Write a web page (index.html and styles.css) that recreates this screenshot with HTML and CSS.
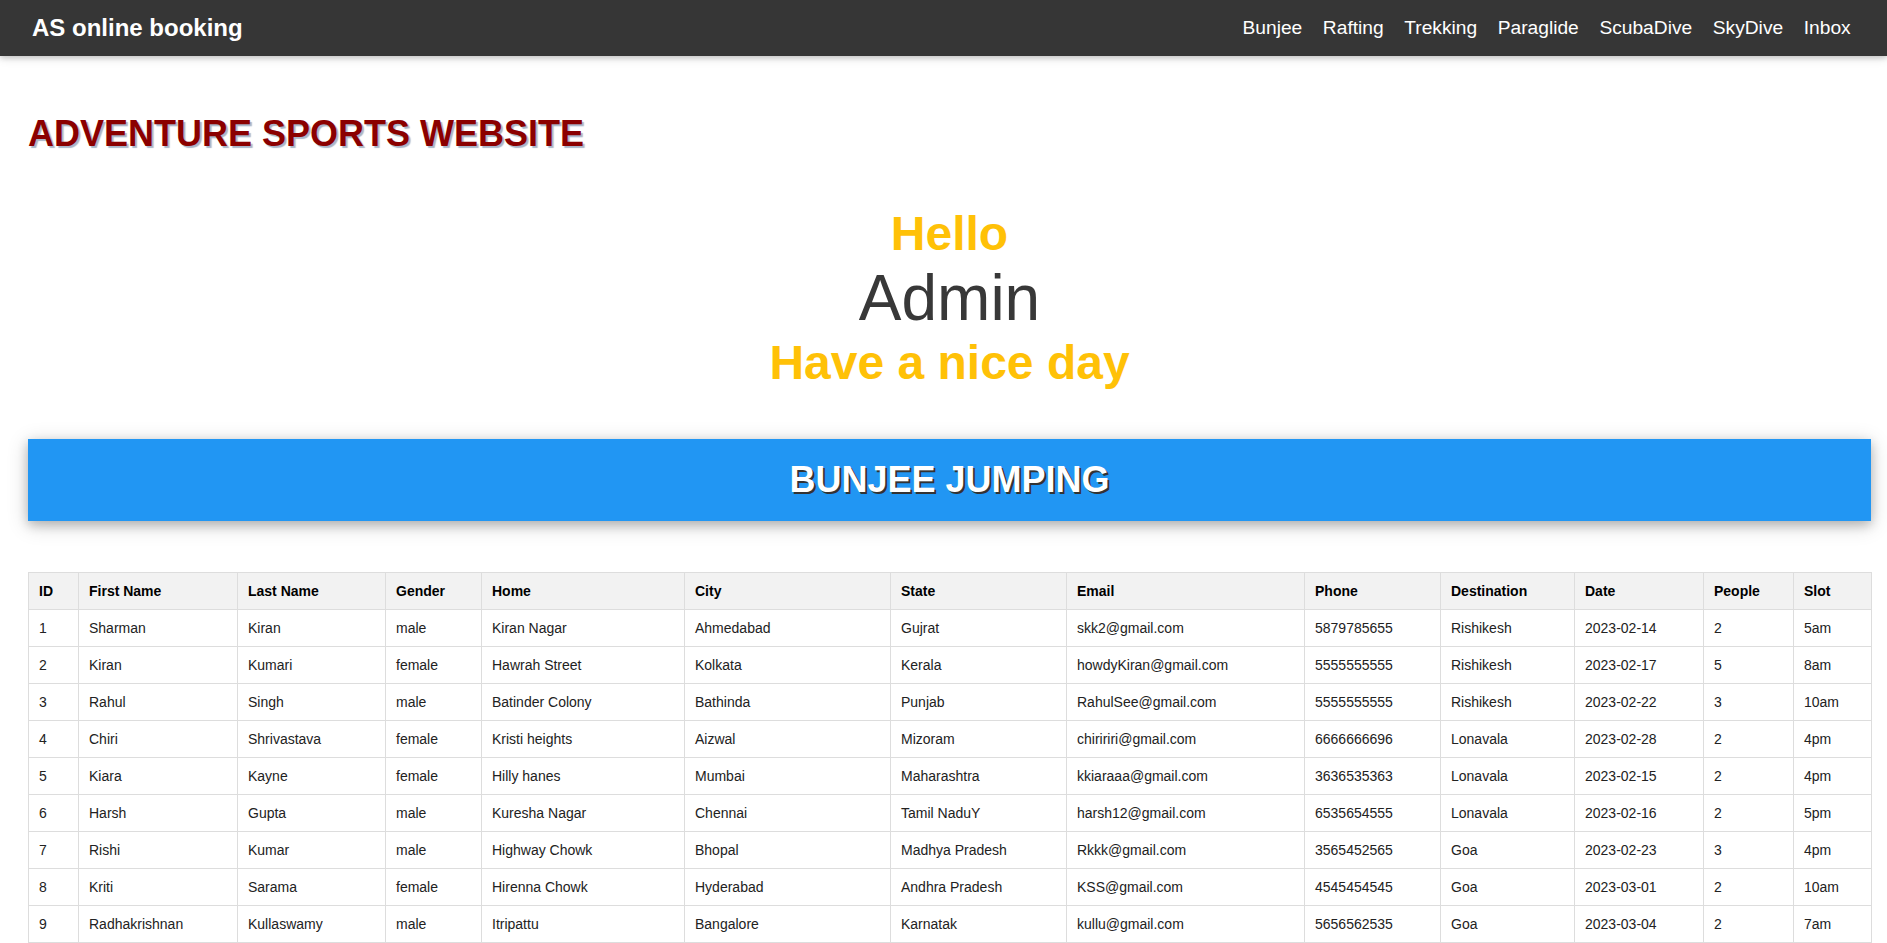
FILE: index.html
```html
<!DOCTYPE html>
<html lang="en">
<head>
<meta charset="utf-8">
<title>AS online booking</title>
<link rel="stylesheet" href="styles.css">
</head>
<body>
<nav class="navbar">
  <a class="brand" href="#">AS online booking</a>
  <ul class="nav-links">
    <li><a href="#">Bunjee</a></li>
    <li><a href="#">Rafting</a></li>
    <li><a href="#">Trekking</a></li>
    <li><a href="#">Paraglide</a></li>
    <li><a href="#">ScubaDive</a></li>
    <li><a href="#">SkyDive</a></li>
    <li><a href="#">Inbox</a></li>
  </ul>
</nav>
<main class="page">
  <h1 class="site-title">ADVENTURE SPORTS WEBSITE</h1>
  <section class="greeting">
    <div class="hello">Hello</div>
    <div class="user">Admin</div>
    <div class="wish">Have a nice day</div>
  </section>
  <header class="banner"><h2>BUNJEE JUMPING</h2></header>
  <table class="bookings">
    <thead>
      <tr>
        <th class="c-id">ID</th><th class="c-first">First Name</th><th class="c-last">Last Name</th><th class="c-gender">Gender</th><th class="c-home">Home</th><th class="c-city">City</th><th class="c-state">State</th><th class="c-email">Email</th><th class="c-phone">Phone</th><th class="c-dest">Destination</th><th class="c-date">Date</th><th class="c-people">People</th><th class="c-slot">Slot</th>
      </tr>
    </thead>
    <tbody>
      <tr><td>1</td><td>Sharman</td><td>Kiran</td><td>male</td><td>Kiran Nagar</td><td>Ahmedabad</td><td>Gujrat</td><td>skk2@gmail.com</td><td>5879785655</td><td>Rishikesh</td><td>2023-02-14</td><td>2</td><td>5am</td></tr>
      <tr><td>2</td><td>Kiran</td><td>Kumari</td><td>female</td><td>Hawrah Street</td><td>Kolkata</td><td>Kerala</td><td>howdyKiran@gmail.com</td><td>5555555555</td><td>Rishikesh</td><td>2023-02-17</td><td>5</td><td>8am</td></tr>
      <tr><td>3</td><td>Rahul</td><td>Singh</td><td>male</td><td>Batinder Colony</td><td>Bathinda</td><td>Punjab</td><td>RahulSee@gmail.com</td><td>5555555555</td><td>Rishikesh</td><td>2023-02-22</td><td>3</td><td>10am</td></tr>
      <tr><td>4</td><td>Chiri</td><td>Shrivastava</td><td>female</td><td>Kristi heights</td><td>Aizwal</td><td>Mizoram</td><td>chiririri@gmail.com</td><td>6666666696</td><td>Lonavala</td><td>2023-02-28</td><td>2</td><td>4pm</td></tr>
      <tr><td>5</td><td>Kiara</td><td>Kayne</td><td>female</td><td>Hilly hanes</td><td>Mumbai</td><td>Maharashtra</td><td>kkiaraaa@gmail.com</td><td>3636535363</td><td>Lonavala</td><td>2023-02-15</td><td>2</td><td>4pm</td></tr>
      <tr><td>6</td><td>Harsh</td><td>Gupta</td><td>male</td><td>Kuresha Nagar</td><td>Chennai</td><td>Tamil NaduY</td><td>harsh12@gmail.com</td><td>6535654555</td><td>Lonavala</td><td>2023-02-16</td><td>2</td><td>5pm</td></tr>
      <tr><td>7</td><td>Rishi</td><td>Kumar</td><td>male</td><td>Highway Chowk</td><td>Bhopal</td><td>Madhya Pradesh</td><td>Rkkk@gmail.com</td><td>3565452565</td><td>Goa</td><td>2023-02-23</td><td>3</td><td>4pm</td></tr>
      <tr><td>8</td><td>Kriti</td><td>Sarama</td><td>female</td><td>Hirenna Chowk</td><td>Hyderabad</td><td>Andhra Pradesh</td><td>KSS@gmail.com</td><td>4545454545</td><td>Goa</td><td>2023-03-01</td><td>2</td><td>10am</td></tr>
      <tr><td>9</td><td>Radhakrishnan</td><td>Kullaswamy</td><td>male</td><td>Itripattu</td><td>Bangalore</td><td>Karnatak</td><td>kullu@gmail.com</td><td>5656562535</td><td>Goa</td><td>2023-03-04</td><td>2</td><td>7am</td></tr>
    </tbody>
  </table>
</main>
</body>
</html>
```

FILE: styles.css
```css
* { box-sizing: border-box; }

html, body {
  margin: 0;
  padding: 0;
  background: #ffffff;
  font-family: "Liberation Sans", Arial, Helvetica, sans-serif;
  color: #222;
}

.navbar {
  height: 56px;
  background: #363636;
  display: flex;
  align-items: center;
  justify-content: space-between;
  padding: 0 26px 0 32px;
  box-shadow: 0 2px 5px 0 rgba(0,0,0,0.16), 0 2px 10px 0 rgba(0,0,0,0.12);
}

.brand {
  color: #ffffff;
  font-weight: bold;
  font-size: 24px;
  text-decoration: none;
  line-height: 52px;
}

.nav-links {
  list-style: none;
  margin: 0;
  padding: 0;
  display: flex;
}

.nav-links a {
  display: block;
  color: #ffffff;
  text-decoration: none;
  font-size: 19.2px;
  padding: 0 10.3px;
  line-height: 52px;
}

.page {
  padding: 0 16px 0 28px;
}

.site-title {
  margin: 57px 0 0 0;
  font-size: 36px;
  line-height: normal;
  font-weight: bold;
  color: #8b0000;
  text-shadow: 2px 2px 1px #a9b6c9;
}

.greeting {
  text-align: center;
  margin-top: 51px;
  line-height: normal;
}

.hello, .wish {
  font-size: 48px;
  font-weight: bold;
  color: #ffc107;
}

.user {
  font-size: 64px;
  color: #383838;
}

.banner {
  margin-top: 49px;
  background: #2196f3;
  padding: 20px 16px;
  text-align: center;
  box-shadow: 0 4px 10px 0 rgba(0,0,0,0.2), 0 4px 20px 0 rgba(0,0,0,0.19);
}

.banner h2 {
  margin: 0;
  font-size: 36px;
  line-height: normal;
  color: #ffffff;
  text-shadow: 2px 2px 0 #333;
}

.bookings {
  margin-top: 51px;
  width: 100%;
  table-layout: fixed;
  border-collapse: collapse;
  font-size: 14px;
  line-height: 20px;
  border: 1px solid #ddd;
}

.bookings th,
.bookings td {
  border: 1px solid #ddd;
  padding: 8px 10px;
  text-align: left;
  white-space: nowrap;
  overflow: hidden;
}

.bookings th {
  background: #f2f2f2;
  color: #000;
  font-weight: bold;
}

.bookings td { color: #222; }

.c-id { width: 50px; }
.c-first { width: 159px; }
.c-last { width: 148px; }
.c-gender { width: 96px; }
.c-home { width: 203px; }
.c-city { width: 206px; }
.c-state { width: 176px; }
.c-email { width: 238px; }
.c-phone { width: 136px; }
.c-dest { width: 134px; }
.c-date { width: 129px; }
.c-people { width: 90px; }
.c-slot { width: 78px; }
```
